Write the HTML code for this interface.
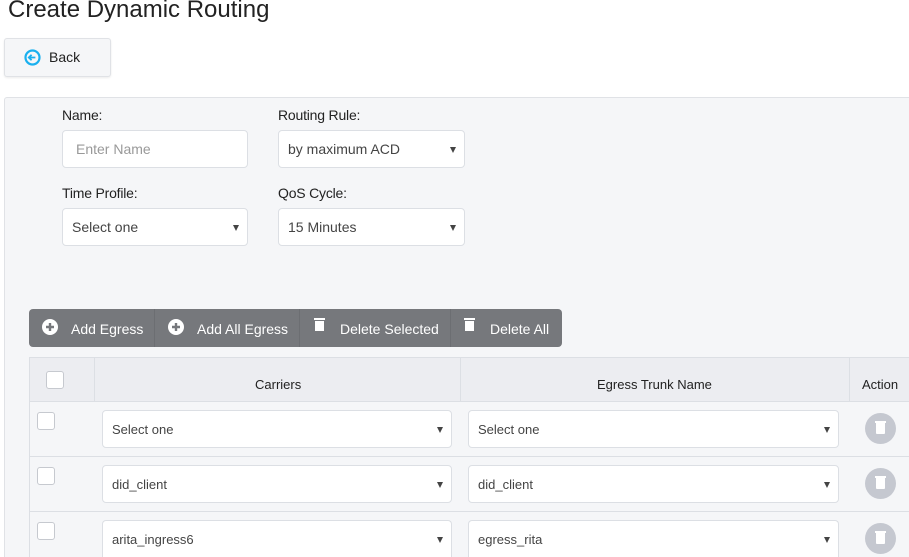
<!DOCTYPE html>
<html style="height:557px;overflow:hidden"><head><style>
*{box-sizing:border-box;margin:0;padding:0}
body{width:909px;height:557px;overflow:hidden;background:#fff;font-family:"Liberation Sans",sans-serif;position:relative;color:#222}
.a{position:absolute}
.lbl{font-size:14px;color:#222;letter-spacing:-0.2px}
.in{position:absolute;background:#fff;border:1px solid #dcdfe4;border-radius:4px;font-size:14px;color:#444;padding-left:9px;display:flex;align-items:center}
.in .ar{position:absolute;right:8px;top:50%;margin-top:-2px;width:0;height:0;border-left:3px solid transparent;border-right:3px solid transparent;border-top:6px solid #444}
.cb{position:absolute;width:18px;height:18px;background:#fff;border:1px solid #c6c9cf;border-radius:3px}
.tb{position:absolute;top:309px;height:39px;display:flex;align-items:center;color:#fff;font-size:14px}
.circ{position:absolute;width:31px;height:31px;border-radius:50%;background:#c5c8d0}
.circ i{position:absolute;left:11px;top:10px;width:9px;height:11px;background:#fff;border-radius:0 0 1px 1px}
.circ i:before{content:"";position:absolute;left:-1px;top:-2px;width:11px;height:2px;background:#fff}
.hl{position:absolute;height:1px;background:#dcdfe4}
.vl{position:absolute;width:1px;background:#dcdfe4}
</style></head><body>
<div class="a" style="left:8px;top:-4px;font-size:24px;color:#222">Create Dynamic Routing</div>
<div class="a" style="left:4px;top:38px;width:107px;height:39px;background:#f5f6f8;border:1px solid #e0e2e6;border-radius:3px;box-shadow:0 1px 2px rgba(0,0,0,.08)">
<svg class="a" style="left:19px;top:10px" width="17" height="17" viewBox="0 0 17 17"><circle cx="8.5" cy="8.5" r="7" fill="none" stroke="#1ab0ef" stroke-width="2.2"/><path d="M4.8 8.5h6.6M7.6 5.8L4.8 8.5l2.8 2.7" fill="none" stroke="#1ab0ef" stroke-width="1.8"/></svg>
<div class="a" style="left:44px;top:10px;font-size:14px">Back</div></div>
<div class="a" style="left:4px;top:97px;width:905px;height:460px;background:#f5f6f8;border:1px solid #e0e2e6;border-right:none;border-bottom:none;border-radius:3px 0 0 0"></div>
<div class="a lbl" style="left:62px;top:107px">Name:</div>
<div class="a lbl" style="left:278px;top:107px">Routing Rule:</div>
<div class="in" style="left:62px;top:130px;width:186px;height:38px;color:#999;padding-left:13px">Enter Name</div>
<div class="in" style="left:278px;top:130px;width:187px;height:38px">by maximum ACD<span class="ar"></span></div>
<div class="a lbl" style="left:62px;top:185px">Time Profile:</div>
<div class="a lbl" style="left:278px;top:185px">QoS Cycle:</div>
<div class="in" style="left:62px;top:208px;width:186px;height:38px">Select one<span class="ar"></span></div>
<div class="in" style="left:278px;top:208px;width:187px;height:38px">15 Minutes<span class="ar"></span></div>

<div class="a" style="left:29px;top:309px;width:533px;height:38px;background:#76787c;border-radius:4px"></div>
<div class="vl" style="left:154px;top:309px;height:38px;background:#6c6e72"></div>
<div class="vl" style="left:299px;top:309px;height:38px;background:#6c6e72"></div>
<div class="vl" style="left:450px;top:309px;height:38px;background:#6c6e72"></div>
<svg class="a" style="left:42px;top:319px" width="16" height="16"><circle cx="8" cy="8" r="8" fill="#fff"/><path d="M8 4v8M4 8h8" stroke="#76787c" stroke-width="2.4"/></svg>
<div class="tb" style="left:71px">Add Egress</div>
<svg class="a" style="left:168px;top:319px" width="16" height="16"><circle cx="8" cy="8" r="8" fill="#fff"/><path d="M8 4v8M4 8h8" stroke="#76787c" stroke-width="2.4"/></svg>
<div class="tb" style="left:197px">Add All Egress</div>
<svg class="a" style="left:314px;top:318px" width="11" height="13"><rect x="0" y="0" width="11" height="2" fill="#fff"/><rect x="1" y="3" width="9" height="10" fill="#fff"/></svg>
<div class="tb" style="left:340px">Delete Selected</div>
<svg class="a" style="left:464px;top:318px" width="11" height="13"><rect x="0" y="0" width="11" height="2" fill="#fff"/><rect x="1" y="3" width="9" height="10" fill="#fff"/></svg>
<div class="tb" style="left:490px">Delete All</div>

<div class="a" style="left:29px;top:357px;width:880px;height:200px;background:#f5f6f8;border:1px solid #dcdfe4;border-right:none;border-bottom:none"></div>
<div class="a" style="left:30px;top:358px;width:879px;height:43px;background:#ecedf1"></div>
<div class="hl" style="left:29px;top:401px;width:880px"></div>
<div class="hl" style="left:29px;top:456px;width:880px"></div>
<div class="hl" style="left:29px;top:511px;width:880px"></div>
<div class="vl" style="left:94px;top:358px;height:43px"></div>
<div class="vl" style="left:460px;top:358px;height:43px"></div>
<div class="vl" style="left:849px;top:358px;height:43px"></div>
<div class="a" style="left:255px;top:377px;font-size:13px">Carriers</div>
<div class="a" style="left:597px;top:377px;font-size:13px">Egress Trunk Name</div>
<div class="a" style="left:862px;top:377px;font-size:13px">Action</div>
<div class="cb" style="left:46px;top:371px"></div>

<div class="cb" style="left:37px;top:412px"></div>
<div class="in" style="left:102px;top:410px;width:350px;height:38px;font-size:13px">Select one<span class="ar"></span></div>
<div class="in" style="left:468px;top:410px;width:371px;height:38px;font-size:13px">Select one<span class="ar"></span></div>
<div class="circ" style="left:865px;top:413px"><i></i></div>

<div class="cb" style="left:37px;top:467px"></div>
<div class="in" style="left:102px;top:465px;width:350px;height:38px;font-size:13px">did_client<span class="ar"></span></div>
<div class="in" style="left:468px;top:465px;width:371px;height:38px;font-size:13px">did_client<span class="ar"></span></div>
<div class="circ" style="left:865px;top:468px"><i></i></div>

<div class="cb" style="left:37px;top:522px"></div>
<div class="in" style="left:102px;top:520px;width:350px;height:37px;font-size:13px;border-bottom:none;border-radius:4px 4px 0 0">arita_ingress6<span class="ar"></span></div>
<div class="in" style="left:468px;top:520px;width:371px;height:37px;font-size:13px;border-bottom:none;border-radius:4px 4px 0 0">egress_rita<span class="ar"></span></div>
<div class="circ" style="left:865px;top:523px"><i></i></div>
</body></html>
